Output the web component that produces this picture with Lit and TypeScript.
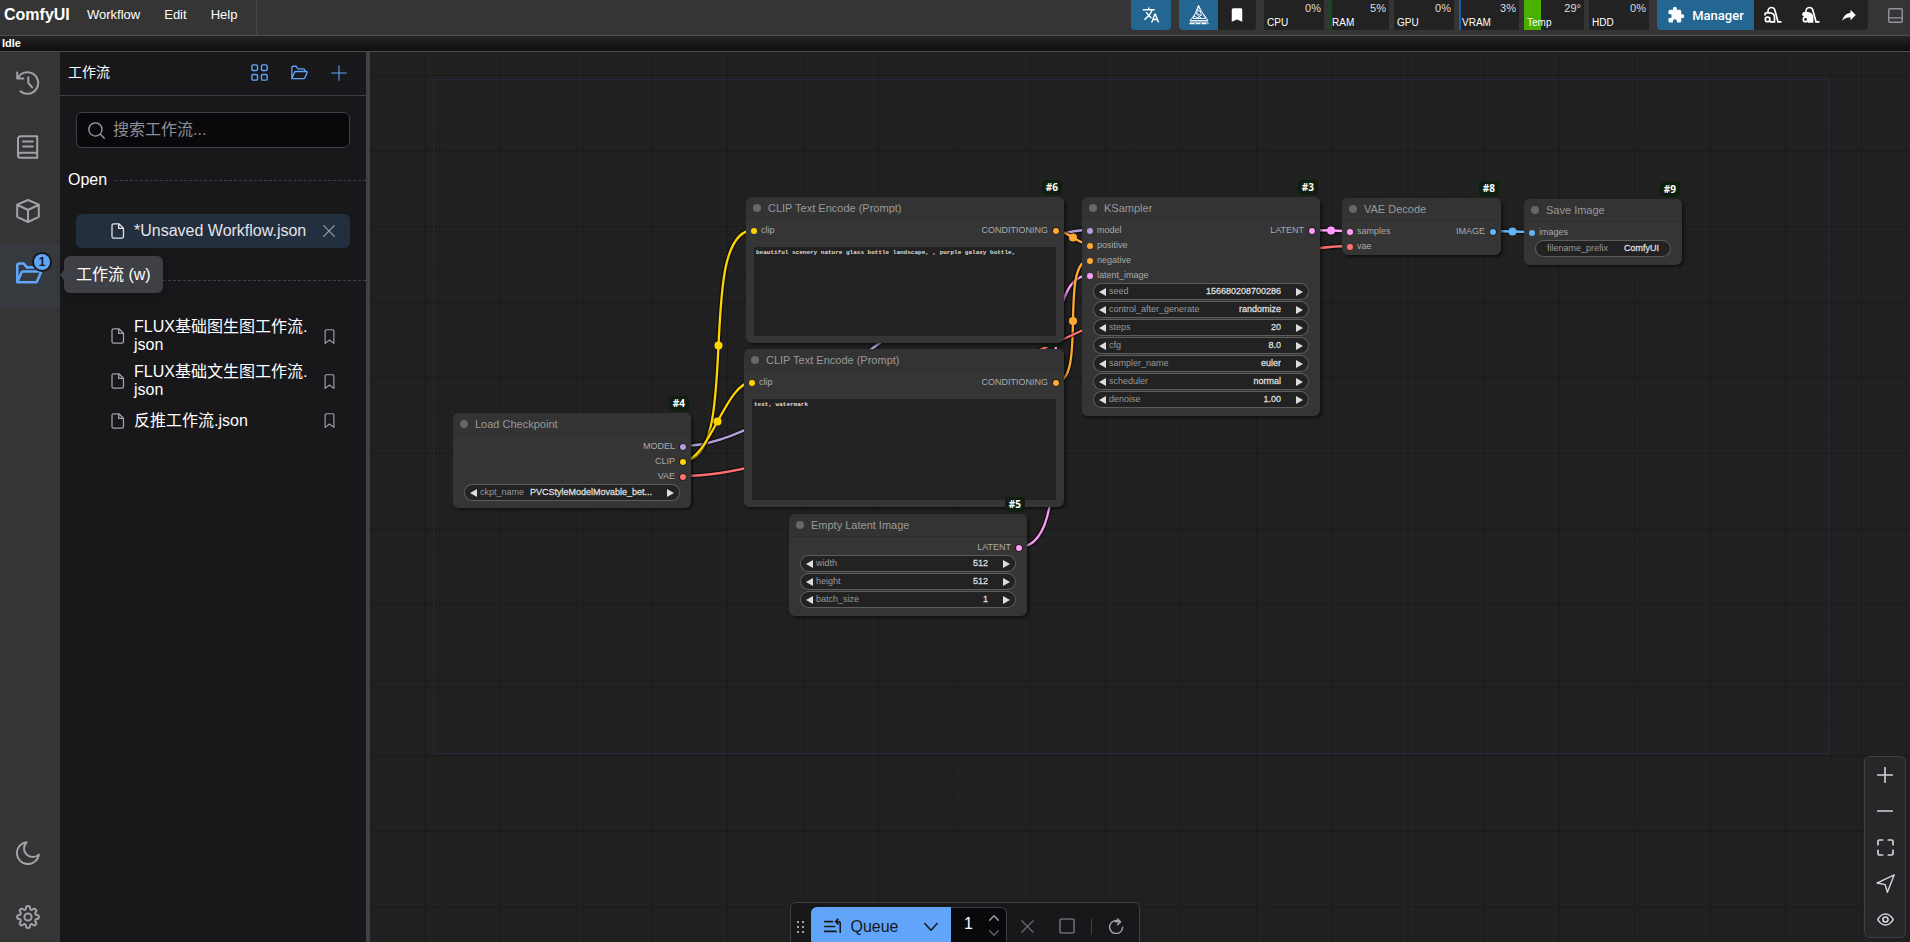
import { LitElement, html, svg, css, nothing, TemplateResult } from "lit";
import { customElement, property } from "lit/decorators.js";
import { classMap } from "lit/directives/class-map.js";
import { styleMap } from "lit/directives/style-map.js";

/* ---------- icons ---------- */

const line = (body: TemplateResult, size = 16, w = 1.5, box = 24) => html`
  <svg width=${size} height=${size} viewBox="0 0 ${box} ${box}" fill="none" stroke="currentColor"
    stroke-width=${w} stroke-linecap="round" stroke-linejoin="round" aria-hidden="true">${body}</svg>`;

const solid = (d: string, size = 18) => html`
  <svg width=${size} height=${size} viewBox="0 0 24 24" fill="currentColor" aria-hidden="true"><path d=${d}></path></svg>`;

const folderShape = svg`<path d="M1.2 20.6V5a1.8 1.8 0 0 1 1.8-1.8h4.2L10 6.8h7.6a1.8 1.8 0 0 1 1.8 1.8v2M1.2 20.6 5 11.6a1.6 1.6 0 0 1 1.5-1h15.1c1 0 1.5.8 1.1 1.7l-3.2 7.3a1.6 1.6 0 0 1-1.5 1z"></path>`;

const icons = {
  history: () => line(svg`<path d="M1.2 1.4v6.2h6.2M1.7 7.2A10.8 10.8 0 1 1 4.6 20.4M12.3 6.2v5.6l3.8 4.6"></path>`, 24, 2),
  book: () => line(svg`<path d="M4.6 1.2h16.6v21.6H4.4a2.4 2.4 0 0 1-2.4-2.4V3.8a2.6 2.6 0 0 1 2.6-2.6zM2.2 19.6a2.6 2.6 0 0 1 2.2-1.8h16.8M7 6.6h9.8M7 11.6h9.8"></path>`, 24, 2),
  cube: () => line(svg`<path d="M12 1 22.8 5.6v12.2L12 23 1.2 17.8V5.6zM1.4 5.8 12 11l10.6-5.2M12 11v11.8"></path>`, 24, 2),
  folderBig: () => line(folderShape, 26, 2.4),
  folder: () => line(folderShape, 17, 1.9),
  moon: () => line(svg`<path d="M10.6 1.2A11 11 0 1 0 22.8 13.6 8.6 8.6 0 0 1 10.6 1.2z"></path>`, 24, 2),
  gear: () => line(svg`<circle cx="12" cy="12" r="3.6"></circle><path d="M9.9 3.3C9.9 1.9 10.8 1.1 12 1.1s2.1.8 2.1 2.2c0 1.5 1.6 2.1 2.6 1.1.9-1 2.200-.9 3 0 .8.8.8 2-.1 2.900-1 1-.4 2.600 1.100 2.600 1.400 0 2.200.9 2.200 2.100s-.8 2.100-2.200 2.100c-1.500 0-2.100 1.600-1.100 2.600.9.9.9 2.200.1 3-.8.8-2.100.8-3-.1-1-1-2.600-.4-2.600 1.100 0 1.400-.9 2.200-2.100 2.200s-2.100-.8-2.100-2.200c0-1.500-1.600-2.100-2.600-1.100-.9.9-2.200.9-3 .1-.8-.8-.8-2.100.1-3 1-1 .4-2.600-1.100-2.600C1.900 14.100 1.100 13.200 1.100 12s.8-2.100 2.200-2.100c1.500 0 2.100-1.600 1.100-2.600-.9-.9-.9-2.100-.1-2.900.8-.9 2.100-1 3 0 1 1 2.600.4 2.600-1.100z"></path>`, 24, 2),
  grid: () => line(svg`<rect x="1.200" y="1.200" width="8" height="8" rx="1.800"></rect><rect x="14.800" y="1.200" width="8" height="8" rx="1.800"></rect><rect x="1.200" y="14.800" width="8" height="8" rx="1.800"></rect><rect x="14.800" y="14.800" width="8" height="8" rx="1.800"></rect>`, 17, 2),
  plus: (s = 16, w = 1.6) => line(svg`<path d="M12 1v22M1 12h22"></path>`, s, w),
  minus: () => line(svg`<path d="M1 12h22"></path>`, 16, 2.4),
  search: () => line(svg`<circle cx="10.500" cy="10.500" r="9.300"></circle><path d="m17.400 17.400 5.600 5.600"></path>`, 17, 1.8),
  file: () => line(svg`<path d="M5.400 1.200h8l6.800 6.600v12.600a2.400 2.400 0 0 1-2.400 2.400H5.400A2.400 2.400 0 0 1 3 20.400V3.600a2.400 2.400 0 0 1 2.400-2.400zM13 1.400v6.800h7"></path>`, 16, 1.9),
  bookmark: () => line(svg`<path d="M5 23V2.800A1.600 1.600 0 0 1 6.600 1.200h10.800A1.600 1.600 0 0 1 19 2.800V23l-7-5.400z"></path>`, 15, 1.8),
  close: (s = 12) => line(svg`<path d="m1.400 1.400 21.200 21.200M22.600 1.400 1.400 22.600"></path>`, s, 2.2),
  square: () => line(svg`<rect x="1.400" y="1.400" width="21.200" height="21.200" rx="2.600"></rect>`, 16, 2.4),
  refresh: () => line(svg`<path d="M18.200 5.800A9.800 9.800 0 1 0 22 13.800M11.600 5.800h7.200M14.400 1.400l4.400 4.400-4.400 4.400"></path>`, 16, 2.2),
  queue: () => line(svg`<path d="M1 5h11M1 12h14M1 19h16M23 20V7.500a2.500 2.500 0 0 0-2.500-2.500H17M19.600 1.600 16.400 5l3.200 3.400"></path>`, 17, 2.4),
  chevron: () => line(svg`<path d="m1.400 6 10.600 11.400L22.600 6"></path>`, 14, 2.6),
  up: () => line(svg`<path d="m1.600 17.500 10.400-11 10.400 11"></path>`, 10, 3.2),
  down: () => line(svg`<path d="m1.600 6.500 10.400 11 10.400-11"></path>`, 10, 3.2),
  fit: () => line(svg`<path d="M1.400 8V3.400a2 2 0 0 1 2-2H8M16 1.400h4.600a2 2 0 0 1 2 2V8M22.600 16v4.600a2 2 0 0 1-2 2H16M8 22.600H3.400a2 2 0 0 1-2-2V16"></path>`, 17, 2.4),
  send: () => line(svg`<path d="M23 1 1.200 11.400l10.400 2L14.400 23z"></path>`, 19, 1.8),
  eye: () => line(svg`<path d="M1.200 12S5 4.200 12 4.200 22.800 12 22.800 12 19 19.800 12 19.800 1.200 12 1.200 12z"></path><circle cx="12" cy="12" r="3.600"></circle>`, 17, 2.3),
  panel: () => line(svg`<rect x="1.200" y="1.200" width="21.600" height="21.600" rx="1.600"></rect><path d="M1.200 15.800h21.600"></path>`, 15, 2.2),
  translate: () => solid("M12.87,15.07L10.33,12.56L10.36,12.53C12.1,10.59 13.34,8.36 14.07,6H17V4H10V2H8V4H1V6H12.17C11.5,7.92 10.44,9.75 9,11.35C8.07,10.32 7.3,9.19 6.69,8H4.69C5.42,9.63 6.42,11.17 7.67,12.56L2.58,17.58L4,19L9,14L12.11,17.11L12.87,15.07M18.5,10H16.5L12,22H14L15.12,19H19.87L21,22H23L18.5,10M15.88,17L17.5,12.67L19.12,17H15.88Z"),
  puzzle: () => solid("M20.5,11H19V7C19,5.89 18.1,5 17,5H13V3.5A2.5,2.5 0 0,0 10.5,1A2.5,2.5 0 0,0 8,3.5V5H4A2,2 0 0,0 2,7V10.8H3.5C5,10.8 6.2,12 6.2,13.5C6.2,15 5,16.2 3.5,16.2H2V20A2,2 0 0,0 4,22H7.8V20.5C7.8,19 9,17.8 10.5,17.8C12,17.8 13.2,19 13.2,20.5V22H17A2,2 0 0,0 19,20V16H20.5A2.5,2.5 0 0,0 23,13.5A2.5,2.5 0 0,0 20.5,11Z"),
  share: () => solid("M21,12L14,5V9C7,10 4,15 3,20C5.5,16.5 9,14.9 14,14.9V19L21,12Z"),
  mark: () => solid("M17,3H7A2,2 0 0,0 5,5V21L12,18L19,21V5C19,3.89 18.1,3 17,3Z"),
  crystal: () => html`<svg width="20" height="20" viewBox="0 0 20 20" fill="none" stroke="currentColor" stroke-width="1" aria-hidden="true">
    <path d="M9.500 0.500 4 13.500h12.500zM9.500 0.500l3 9-4 4M9.500 0.500 7.500 9l5 4.500M5.500 10 1 15.500h18L14.500 9M6.500 8l6 2.500M1 17h18M8 4.500l4 3M5 11l5 2.500" opacity=".9"></path>
    <path d="M0.500 18.500h19" stroke-width="1.500" stroke-dasharray="5 1"></path></svg>`,
  vacuum: (full: boolean) => html`<svg width="18" height="18" viewBox="0 0 18 18" fill="none" stroke="currentColor" stroke-width="1.700" aria-hidden="true">
    <path d="M4 6.500V5a3.500 3.500 0 0 1 3.500-3.500c2 0 2.800 1 3.300 2.600L14 15.800h3.500"></path>
    <path d="M1 9.500V8.200A1.400 1.400 0 0 1 2.400 6.800H6a4.500 4.500 0 0 1 4.500 4.500v4.500H6" fill=${full ? "currentColor" : "none"}></path>
    <circle cx="3.600" cy="13.400" r="2.300" fill=${full ? "#222" : "none"}></circle></svg>`,
  tri: (dir: "l" | "r") => html`<svg width="7" height="8" viewBox="0 0 7 8" fill="currentColor" aria-hidden="true">
    <path d=${dir === "l" ? "M7 0v8L0 4z" : "M0 0v8l7-4z"}></path></svg>`,
};

/* ---------- graph data ---------- */

const tint = {
  model: "#b39ddb", clip: "#ffd500", vae: "#ff6e6e",
  cond: "#ffa931", latent: "#ff9cf9", image: "#64b5f6",
};

interface Slot { label: string; color: string }
interface Widget { kind: "number" | "combo" | "text"; name: string; value: string }
interface NodeData {
  id: number; title: string; x: number; y: number; w: number; h: number;
  inputs: Slot[]; outputs: Slot[]; widgets?: Widget[]; prompt?: string;
}

const nodes: NodeData[] = [
  { id: 7, title: "CLIP Text Encode (Prompt)", x: 744, y: 349, w: 320, h: 158,
    inputs: [{ label: "clip", color: tint.clip }], outputs: [{ label: "CONDITIONING", color: tint.cond }],
    prompt: "text, watermark" },
  { id: 6, title: "CLIP Text Encode (Prompt)", x: 746, y: 197, w: 318, h: 146,
    inputs: [{ label: "clip", color: tint.clip }], outputs: [{ label: "CONDITIONING", color: tint.cond }],
    prompt: "beautiful scenery nature glass bottle landscape, , purple galaxy bottle," },
  { id: 5, title: "Empty Latent Image", x: 789, y: 514, w: 238, h: 102,
    inputs: [], outputs: [{ label: "LATENT", color: tint.latent }],
    widgets: [
      { kind: "number", name: "width", value: "512" },
      { kind: "number", name: "height", value: "512" },
      { kind: "number", name: "batch_size", value: "1" },
    ] },
  { id: 3, title: "KSampler", x: 1082, y: 197, w: 238, h: 219,
    inputs: [
      { label: "model", color: tint.model }, { label: "positive", color: tint.cond },
      { label: "negative", color: tint.cond }, { label: "latent_image", color: tint.latent },
    ],
    outputs: [{ label: "LATENT", color: tint.latent }],
    widgets: [
      { kind: "number", name: "seed", value: "156680208700286" },
      { kind: "combo", name: "control_after_generate", value: "randomize" },
      { kind: "number", name: "steps", value: "20" },
      { kind: "number", name: "cfg", value: "8.0" },
      { kind: "combo", name: "sampler_name", value: "euler" },
      { kind: "combo", name: "scheduler", value: "normal" },
      { kind: "number", name: "denoise", value: "1.00" },
    ] },
  { id: 8, title: "VAE Decode", x: 1342, y: 198, w: 159, h: 57,
    inputs: [{ label: "samples", color: tint.latent }, { label: "vae", color: tint.vae }],
    outputs: [{ label: "IMAGE", color: tint.image }] },
  { id: 9, title: "Save Image", x: 1524, y: 199, w: 158, h: 66,
    inputs: [{ label: "images", color: tint.image }], outputs: [],
    widgets: [{ kind: "text", name: "filename_prefix", value: "ComfyUI" }] },
  { id: 4, title: "Load Checkpoint", x: 453, y: 413, w: 238, h: 95,
    inputs: [],
    outputs: [
      { label: "MODEL", color: tint.model }, { label: "CLIP", color: tint.clip }, { label: "VAE", color: tint.vae },
    ],
    widgets: [{ kind: "combo", name: "ckpt_name", value: "PVCStyleModelMovable_bet..." }] },
];

interface Link { from: [number, number]; to: [number, number]; color: string }
const links: Link[] = [
  { from: [4, 0], to: [3, 0], color: tint.model },
  { from: [5, 0], to: [3, 3], color: tint.latent },
  { from: [4, 1], to: [6, 0], color: tint.clip },
  { from: [6, 0], to: [3, 1], color: tint.cond },
  { from: [4, 1], to: [7, 0], color: tint.clip },
  { from: [7, 0], to: [3, 2], color: tint.cond },
  { from: [3, 0], to: [8, 0], color: tint.latent },
  { from: [4, 2], to: [8, 1], color: tint.vae },
  { from: [8, 0], to: [9, 0], color: tint.image },
];

const TITLE = 23;
const SLOT = 15;
const byId = (id: number) => nodes.find((n) => n.id === id)!;
const slotY = (n: NodeData, i: number) => n.y + TITLE + 10 + i * SLOT;

/* ---------- node ---------- */

@customElement("graph-node")
class GraphNode extends LitElement {
  @property({ attribute: false }) data!: NodeData;

  static styles = css`
    :host { display: block; font-family: "Liberation Sans", Arial, sans-serif; font-size: 9px; line-height: 15px; color: #aaa; }
    .node { position: relative; box-sizing: border-box; height: 100%; display: flex; flex-direction: column; background: #353535; border-radius: 6px; box-shadow: 2px 2px 3px rgba(0, 0, 0, .5); }
    .badge { position: absolute; right: 2px; bottom: 100%; margin-bottom: 2px; padding: 0 4px; height: 15px; border-radius: 4px; background: #0f1f0f; color: #fff; font: bold 10px/15px "Open Sans", sans-serif; }
    .title { display: flex; align-items: center; gap: 7px; box-sizing: border-box; height: 23px; padding: 0 7px; border-bottom: 1px solid #2e2e2e; border-radius: 6px 6px 0 0; background: #333; font-size: 11px; color: #999; white-space: nowrap; }
    .fold { width: 8px; height: 8px; border-radius: 50%; background: #666; }
    .slots { display: flex; justify-content: space-between; padding: 3px 5px 0; }
    .slot { display: flex; align-items: center; gap: 4px; height: 15px; }
    .out { justify-content: flex-end; gap: 5px; }
    .dot { width: 6px; height: 6px; border-radius: 50%; box-shadow: 0 0 0 1px #222; }
    .in .dot { box-shadow: none; }
    .widgets { display: flex; flex-direction: column; gap: 3px; margin: 1px 12px 0; }
    .pill { display: flex; align-items: center; box-sizing: border-box; height: 15px; padding: 0 5px; border-radius: 8px; background: #222; box-shadow: 0 0 0 1px #5c5c5c; }
    .pill.text { padding: 0 11px; }
    .name { color: #999; margin-left: 3px; flex: none; }
    .text .name { margin-left: 0; }
    .value { flex: 1; min-width: 0; width: 0; height: 15px; margin: 0 15px 0 4px; padding: 0; border: 0; outline: 0; background: none; appearance: none; color: #ddd; -webkit-text-stroke: .3px #ddd; font: inherit; line-height: 15px; text-align: right; text-align-last: right; }
    .text .value { margin-right: 0; }
    .step { display: flex; flex: none; padding: 0; border: 0; background: none; color: #ddd; }
    .prompt { flex: 1; box-sizing: border-box; margin: 9px 8px 7px; padding: 2px; border: 0; outline: 0; resize: none; background: #222; color: #ddd; font: bold 6px/8px "Liberation Mono", monospace; }
  `;

  private widget(w: Widget) {
    const id = `w-${w.name}`;
    const arrows = w.kind !== "text";
    return html`
      <div class=${classMap({ pill: true, text: !arrows })}>
        ${arrows ? html`<button class="step" aria-label="previous ${w.name}">${icons.tri("l")}</button>` : nothing}
        <label class="name" for=${id}>${w.name}</label>
        ${w.kind === "combo"
          ? html`<select class="value" id=${id}><option>${w.value}</option></select>`
          : html`<input class="value" id=${id} type="text" .value=${w.value} />`}
        ${arrows ? html`<button class="step" aria-label="next ${w.name}">${icons.tri("r")}</button>` : nothing}
      </div>`;
  }

  private dot = (color: string) => html`<span class="dot" style=${styleMap({ background: color })}></span>`;

  render() {
    const d = this.data;
    return html`
      <section class="node">
        <span class="badge">#${d.id}</span>
        <div class="title"><span class="fold"></span><span>${d.title}</span></div>
        <div class="slots">
          <div>${d.inputs.map((s) => html`<div class="slot in">${this.dot(s.color)}<span>${s.label}</span></div>`)}</div>
          <div>${d.outputs.map((s) => html`<div class="slot out"><span>${s.label}</span>${this.dot(s.color)}</div>`)}</div>
        </div>
        ${d.prompt ? html`<textarea class="prompt" aria-label="prompt" spellcheck="false" .value=${d.prompt}></textarea>` : nothing}
        ${d.widgets ? html`<div class="widgets">${d.widgets.map((w) => this.widget(w))}</div>` : nothing}
      </section>`;
  }
}

/* ---------- canvas ---------- */

@customElement("graph-canvas")
class GraphCanvas extends LitElement {
  static styles = css`
    :host { display: block; position: relative; overflow: hidden; background: #212121; }
    .wires { position: absolute; inset: 0; width: 100%; height: 100%; }
    .item { position: absolute; }
  `;

  private link(l: Link) {
    const a = byId(l.from[0]);
    const b = byId(l.to[0]);
    const x1 = a.x + a.w - 8, y1 = slotY(a, l.from[1]);
    const x2 = b.x + 8, y2 = slotY(b, l.to[1]);
    const k = Math.hypot(x2 - x1, y2 - y1) * 0.25;
    const d = `M${x1} ${y1}C${x1 + k} ${y1} ${x2 - k} ${y2} ${x2} ${y2}`;
    return svg`
      <path d=${d} fill="none" stroke="#000" stroke-opacity=".5" stroke-width="5"></path>
      <path d=${d} fill="none" stroke=${l.color} stroke-width="2.300"></path>
      <circle cx=${(x1 + x2) / 2} cy=${(y1 + y2) / 2} r="4" fill=${l.color}></circle>`;
  }

  render() {
    return html`
      <svg class="wires" aria-hidden="true">
        <defs>
          <pattern id="fine" width="10" height="10" patternUnits="userSpaceOnUse" patternTransform="translate(1861 831) scale(.756)">
            <path d="M0 .5h10M.5 0v10" stroke="#1e1e1e" stroke-width="1.300"></path>
          </pattern>
          <pattern id="coarse" width="100" height="100" patternUnits="userSpaceOnUse" patternTransform="translate(1861 831) scale(.756)">
            <path d="M0 .5h100M.5 0v100" stroke="#191919" stroke-width="1.300"></path>
          </pattern>
        </defs>
        <rect width="100%" height="100%" fill="url(#fine)"></rect>
        <rect width="100%" height="100%" fill="url(#coarse)"></rect>
        <rect x="433.500" y="79.500" width="1395" height="674" fill="none" stroke="#222a3c"></rect>
        ${links.map((l) => this.link(l))}
      </svg>
      ${nodes.map((n) => html`
        <graph-node class="item" .data=${n}
          style=${styleMap({ left: `${n.x}px`, top: `${n.y}px`, width: `${n.w}px`, height: `${n.h}px` })}></graph-node>`)}`;
  }
}

/* ---------- app ---------- */

interface Stat { name: string; value: string; fill: number; color: string }
const stats: Stat[] = [
  { name: "CPU", value: "0%", fill: 0, color: "#0aa015" },
  { name: "RAM", value: "5%", fill: 5, color: "#07520c" },
  { name: "GPU", value: "0%", fill: 0, color: "#0c86f4" },
  { name: "VRAM", value: "3%", fill: 3, color: "#1760ad" },
  { name: "Temp", value: "29°", fill: 29, color: "#4ab000" },
  { name: "HDD", value: "0%", fill: 0, color: "#730f92" },
];

const saved: [string, string][] = [
  ["FLUX基础图生图工作流.", "json"],
  ["FLUX基础文生图工作流.", "json"],
  ["反推工作流.", "json"],
];

@customElement("app-root")
class AppRoot extends LitElement {
  static styles = css`
    :host { display: grid; grid-template-rows: 36px 15px minmax(0, 1fr); height: 100vh; overflow: hidden; font-family: "Liberation Sans", "Noto Sans CJK SC", Arial, sans-serif; font-size: 16px; color: #fff; background: #212121; }
    button { font: inherit; color: inherit; border: 0; padding: 0; background: none; display: flex; align-items: center; justify-content: center; }
    .canvas { grid-area: 1 / 1 / -1 / -1; }
    .top { grid-area: 1 / 1; z-index: 1; display: flex; align-items: stretch; background: #353535; border-bottom: 1px solid #4e4e4e; }
    .brand { margin: 0; padding: 0 8px 0 4px; font-size: 16px; line-height: 29px; width: 63px; }
    .menus { display: flex; border-right: 1px solid #48484c; padding-right: 7px; }
    .menus button { font-size: 13px; height: 29px; padding: 0 12px; }
    .tools { margin-left: auto; display: flex; gap: 8px; padding-right: 7px; }
    .group { display: flex; height: 30px; border-radius: 0 0 4px 4px; overflow: hidden; background: #222; }
    .group button { width: 38px; }
    .group .blue { width: 39px; background: #236692; }
    .group .solo { width: 40px; }
    .group .wide { width: 97px; gap: 7px; font-size: 13px; font-family: Roboto, sans-serif; font-weight: 500; }
    .stats { display: flex; gap: 5px; height: 30px; }
    .stat { position: relative; width: 60px; display: flex; flex-direction: column; justify-content: space-between; background: #222; }
    .fill { position: absolute; inset: 0 auto 0 0; }
    .num { position: relative; align-self: flex-end; padding: 2px 3px 0 0; font-size: 11px; line-height: 12px; color: #ddd; }
    .cap { position: relative; padding: 0 0 1px 3px; font-size: 10px; line-height: 12px; }
    .dock { width: 15px; height: 31px; margin-left: 12px; color: #94949c; }
    .idle { grid-area: 2 / 1; z-index: 1; padding-left: 2px; font: bold 11px/15px "Liberation Sans", sans-serif; background: linear-gradient(#242424, #0e0e0e); }
    .main { grid-area: 3 / 1; z-index: 1; display: grid; grid-template-columns: 60px 306px 4px minmax(0, 1fr); border-top: 1px solid #4e4e4e; pointer-events: none; min-height: 0; }
    .rail { display: flex; flex-direction: column; background: #353535; color: #a1a1aa; min-height: 0; }
    .rail button { box-sizing: border-box; flex: none; height: 64px; padding: 0 4px 3px 0; }
    .rail .gap { flex: 1 1 0; }
    .rail .last { margin-bottom: -8px; }
    .rail .on { position: relative; background: #36393d; color: #60a5fa; padding: 0 2px 6px 0; }
    .count { position: absolute; left: 34px; top: 10px; width: 16px; height: 16px; border-radius: 50%; background: #60a5fa; color: #18181b; box-shadow: 0 0 0 2px #18181b; font: bold 12px/16px "Liberation Sans", sans-serif; text-align: center; }
    .tip { position: absolute; z-index: 3; left: 64px; top: 12px; height: 37px; padding: 0 12px; border-radius: 6px; background: #3f3f46; color: #fff; line-height: 38px; white-space: nowrap; box-shadow: 0 2px 8px rgba(0, 0, 0, .3); }
    .tip::before { content: ""; position: absolute; left: -4px; top: 14px; border: 5px solid transparent; border-left: 0; border-right: 4px solid #3f3f46; }
    .side { background: #18181b; }
    .split { background: #3f3f46; }
    .head { box-sizing: border-box; display: flex; align-items: center; height: 44px; padding: 0 7px 2px 8px; border-bottom: 1px solid #3f3f46; }
    .head h2 { margin: 0; font-size: 14px; line-height: 20px; padding-bottom: 2px; font-weight: 400; flex: 1; }
    .head button { width: 40px; height: 40px; color: #60a5fa; }
    .search { display: flex; align-items: center; gap: 8px; box-sizing: border-box; height: 36px; margin: 16px 16px 0; padding: 0 11px; border: 1px solid #3f3f46; border-radius: 6px; background: #09090b; color: #a1a1aa; }
    .search input { flex: 1; min-width: 0; padding: 0; border: 0; outline: 0; background: none; color: #fff; font: inherit; }
    .search input::placeholder { color: #8f8f98; opacity: 1; }
    .rule { display: flex; align-items: center; gap: 8px; height: 18px; margin: 23px 0 0 8px; line-height: 18px; }
    .rule::after { content: ""; flex: 1; border-top: 1px dashed #3f3f46; }
    .list { list-style: none; margin: 25px 16px 0; padding: 0; }
    .row { display: grid; grid-template-columns: 16px 177px 20px; align-items: center; column-gap: 8px; box-sizing: border-box; min-height: 34px; padding: 4px 0 5px 34px; line-height: 18px; border-radius: 6px; color: #fff; text-decoration: none; pointer-events: auto; }
    .row svg { color: #a1a1aa; justify-self: center; }
    .row.active { background: #232e3e; }
    .row.active, .row.active svg:first-child { color: #e4e4e7; }
    .empty { margin-top: 23px; }
    .empty + .list { margin-top: 25px; }
    .over { position: relative; min-width: 0; }
    .zoom { position: absolute; right: 4px; bottom: 4px; box-sizing: border-box; width: 42px; padding: 0; border: 1px solid #3f3f46; border-radius: 6px; background: #27272a; color: #d4d4d8; display: flex; flex-direction: column; }
    .zoom button { height: 36px; }
    .queue { position: fixed; left: 50%; bottom: -9px; margin-left: -165px; box-sizing: border-box; height: 49px; width: 350px; padding: 4px 0 4px 6px; display: flex; align-items: stretch; border: 1px solid #3f3f46; border-radius: 6px; background: #18181b; color: #a1a1aa; }
    .grip { display: grid; grid-template-columns: 2px 2px; gap: 3px; width: 14px; align-content: center; }
    .grip i { width: 2px; height: 2px; background: #a1a1aa; }
    .run { width: 100px; gap: 9px; padding: 0 0 0 1px; background: #60a5fa; color: #18181b; border-radius: 6px 0 0 6px; }
    .more { width: 40px; background: #60a5fa; color: #18181b; }
    .batch { display: flex; width: 55px; border: 1px solid #3f3f46; border-left: 0; border-radius: 0 6px 6px 0; background: #09090b; }
    .batch input { width: 31px; padding: 0 0 5px 13px; box-sizing: border-box; border: 0; outline: 0; background: none; color: #fff; font: 16px "Liberation Sans", sans-serif; }
    .spin { display: flex; flex-direction: column; justify-content: space-evenly; align-items: center; width: 24px; padding-bottom: 2px; }
    .act { width: 40px; padding-bottom: 1px; }
    .dim { opacity: .6; }
    .bar { width: 1px; height: 16px; background: #3f3f46; align-self: center; margin: 0 4px; }
  `;

  private top() {
    return html`
      <header class="top">
        <h1 class="brand">ComfyUI</h1>
        <nav class="menus"><button>Workflow</button><button>Edit</button><button>Help</button></nav>
        <div class="tools">
          <div class="group"><button class="blue solo" aria-label="Translate">${icons.translate()}</button></div>
          <div class="group">
            <button class="blue" aria-label="Crystools">${icons.crystal()}</button>
            <button aria-label="Bookmarks">${icons.mark()}</button>
          </div>
          <div class="stats">
            ${stats.map((s) => html`
              <div class="stat">
                <span class="fill" style=${styleMap({ width: `${s.fill}%`, background: s.color })}></span>
                <span class="num">${s.value}</span><span class="cap">${s.name}</span>
              </div>`)}
          </div>
          <div class="group">
            <button class="blue wide">${icons.puzzle()}<span>Manager</span></button>
            <button aria-label="Unload models">${icons.vacuum(false)}</button>
            <button aria-label="Free cache">${icons.vacuum(true)}</button>
            <button aria-label="Share">${icons.share()}</button>
          </div>
          <button class="dock" aria-label="Toggle bottom panel">${icons.panel()}</button>
        </div>
      </header>`;
  }

  private rail() {
    return html`
      <nav class="rail">
        <button aria-label="History">${icons.history()}</button>
        <button aria-label="Node library">${icons.book()}</button>
        <button aria-label="Model library">${icons.cube()}</button>
        <button class="on" aria-label="Workflows">
          ${icons.folderBig()}<span class="count">1</span><span class="tip" role="tooltip">工作流 (w)</span>
        </button>
        <span class="gap"></span>
        <button aria-label="Theme">${icons.moon()}</button>
        <button class="last" aria-label="Settings">${icons.gear()}</button>
      </nav>`;
  }

  private side() {
    return html`
      <aside class="side">
        <div class="head">
          <h2>工作流</h2>
          <button aria-label="Browse templates">${icons.grid()}</button>
          <button aria-label="Open">${icons.folder()}</button>
          <button aria-label="New">${icons.plus()}</button>
        </div>
        <label class="search">${icons.search()}<input type="text" placeholder="搜索工作流..." aria-label="搜索工作流" /></label>
        <div class="rule">Open</div>
        <ul class="list"><li><a class="row active" href="#">${icons.file()}<span>*Unsaved Workflow.json</span>${icons.close()}</a></li></ul>
        <div class="rule empty"></div>
        <ul class="list">
          ${saved.map(([a, b]) => html`<li><a class="row" href="#">${icons.file()}<span>${a}<wbr>${b}</span>${icons.bookmark()}</a></li>`)}
        </ul>
      </aside>`;
  }

  render() {
    return html`
      <graph-canvas class="canvas"></graph-canvas>
      ${this.top()}
      <div class="idle">Idle</div>
      <div class="main">
        ${this.rail()} ${this.side()}
        <div class="split"></div>
        <div class="over">
          <div class="zoom">
            <button aria-label="Zoom in">${icons.plus(16, 2.4)}</button>
            <button aria-label="Zoom out">${icons.minus()}</button>
            <button aria-label="Fit view">${icons.fit()}</button>
            <button aria-label="Select mode">${icons.send()}</button>
            <button aria-label="Toggle links">${icons.eye()}</button>
          </div>
        </div>
      </div>
      <div class="queue">
        <span class="grip">${Array.from({ length: 6 }, () => html`<i></i>`)}</span>
        <button class="run">${icons.queue()}<span>Queue</span></button>
        <button class="more" aria-label="Queue options">${icons.chevron()}</button>
        <div class="batch">
          <input type="text" aria-label="Batch count" .value=${"1"} />
          <div class="spin">
            <button aria-label="Increase">${icons.up()}</button>
            <button class="dim" aria-label="Decrease">${icons.down()}</button>
          </div>
        </div>
        <button class="act dim" aria-label="Cancel">${icons.close(13)}</button>
        <button class="act dim" aria-label="Clear queue">${icons.square()}</button>
        <span class="bar"></span>
        <button class="act" aria-label="Refresh">${icons.refresh()}</button>
      </div>`;
  }
}
